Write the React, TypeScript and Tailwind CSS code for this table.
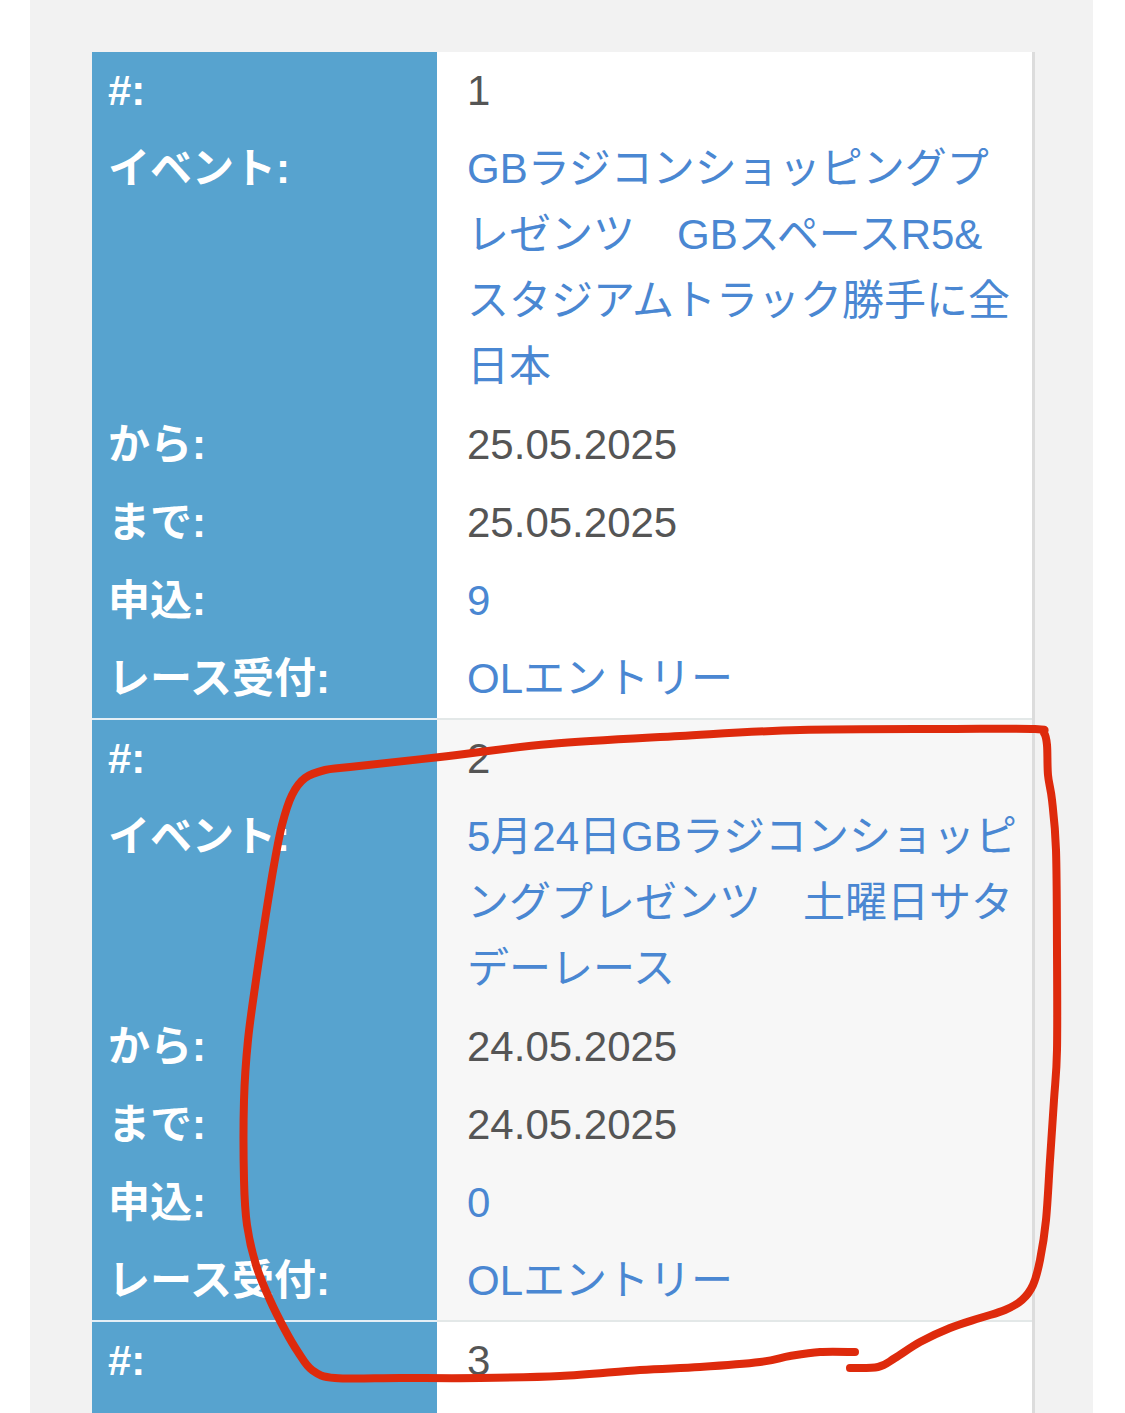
import React from "react";

type Race = {
  id: number;
  event: string;
  from: string;
  to: string;
  entries: string;
};

const races: Race[] = [
  {
    id: 1,
    event: "GBラジコンショッピングプレゼンツ　GBスペースR5&スタジアムトラック勝手に全日本",
    from: "25.05.2025",
    to: "25.05.2025",
    entries: "9",
  },
  {
    id: 2,
    event: "5月24日GBラジコンショッピングプレゼンツ　土曜日サタデーレース",
    from: "24.05.2025",
    to: "24.05.2025",
    entries: "0",
  },
];

// hand-drawn marker stroke around record 2
const scribble: [number, number][] = [
  [855, 1352], [820, 1352], [790, 1356], [760, 1362], [700, 1367], [640, 1370],
  [560, 1376], [480, 1378], [400, 1378], [335, 1378], [312, 1370], [298, 1352],
  [285, 1330], [270, 1300], [256, 1265], [247, 1225], [244, 1180], [244, 1100],
  [248, 1040], [256, 980], [265, 920], [274, 865], [282, 825], [292, 795],
  [305, 778], [325, 770], [350, 767], [440, 757], [550, 744], [680, 736],
  [800, 730], [950, 729], [1035, 729], [1044, 733], [1047, 745], [1048, 775],
  [1052, 800], [1056, 850], [1057, 950], [1057, 1050], [1054, 1100], [1050, 1160],
  [1046, 1220], [1040, 1260], [1033, 1285], [1022, 1300], [1005, 1310], [980, 1318],
  [950, 1328], [920, 1342], [895, 1358], [878, 1367], [850, 1368],
];

function smoothPath(pts: [number, number][]) {
  let d = `M ${pts[0][0]} ${pts[0][1]}`;
  for (let i = 0; i < pts.length - 1; i++) {
    const p0 = pts[i - 1] || pts[i];
    const p1 = pts[i];
    const p2 = pts[i + 1];
    const p3 = pts[i + 2] || p2;
    const c1x = p1[0] + (p2[0] - p0[0]) / 6;
    const c1y = p1[1] + (p2[1] - p0[1]) / 6;
    const c2x = p2[0] - (p3[0] - p1[0]) / 6;
    const c2y = p2[1] - (p3[1] - p1[1]) / 6;
    d += ` C ${c1x} ${c1y} ${c2x} ${c2y} ${p2[0]} ${p2[1]}`;
  }
  return d;
}

function Row({
  label,
  children,
  first,
  index,
}: {
  label: string;
  children?: React.ReactNode;
  first?: boolean;
  index: number;
}) {
  const shaded = index % 2 === 1;
  return (
    <div className="grid grid-cols-[345px_1fr]">
      <div
        className={`bg-[#57a3cf] px-[16px] py-[6px] text-[42px] leading-[66px] font-bold text-white ${
          first && index > 0 ? "border-t-2 border-[#e4eff6]" : ""
        }`}
      >
        {label}
      </div>
      <div
        className={`pl-[30px] pr-[9px] py-[6px] text-[42px] leading-[66px] ${
          shaded ? "bg-[#f7f7f7]" : "bg-white"
        } ${first && index > 0 ? "border-t-2 border-[#e3e8e8]" : ""}`}
      >
        {children}
      </div>
    </div>
  );
}

export default function App() {
  return (
    <div
      className="relative h-[1413px] w-full overflow-hidden bg-white"
      style={{ fontFamily: '"Liberation Sans", "Noto Sans CJK JP", sans-serif' }}
    >
      <div className="ml-[30px] h-full w-[1063px] bg-[#f2f2f2] pl-[62px] pt-[52px]">
        <div className="w-[943px] border-r-[3px] border-[#dcdcdc]">
          {races.map((race, i) => (
            <div key={race.id}>
              <Row label="#:" first index={i}>
                <span className="text-[#555555]">{race.id}</span>
              </Row>
              <Row label="イベント:" index={i}>
                <a href="#" className="text-[#4a87d2]">
                  {race.event}
                </a>
              </Row>
              <Row label="から:" index={i}>
                <span className="text-[#555555]">{race.from}</span>
              </Row>
              <Row label="まで:" index={i}>
                <span className="text-[#555555]">{race.to}</span>
              </Row>
              <Row label="申込:" index={i}>
                <a href="#" className="text-[#4a87d2]">
                  {race.entries}
                </a>
              </Row>
              <Row label="レース受付:" index={i}>
                <a href="#" className="text-[#4a87d2]">
                  OLエントリー
                </a>
              </Row>
            </div>
          ))}
          {/* third record, only its first row is on screen */}
          <Row label="#:" first index={2}>
            <span className="text-[#555555]">3</span>
          </Row>
          <div className="grid h-[40px] grid-cols-[345px_1fr]">
            <div className="bg-[#57a3cf]" />
            <div className="bg-white" />
          </div>
        </div>
      </div>

      <svg
        className="pointer-events-none absolute left-0 top-0"
        width="1125"
        height="1413"
        viewBox="0 0 1125 1413"
      >
        <path
          d={smoothPath(scribble)}
          fill="none"
          stroke="#de2a0c"
          strokeWidth="8"
          strokeLinecap="round"
          strokeLinejoin="round"
        />
      </svg>
    </div>
  );
}
